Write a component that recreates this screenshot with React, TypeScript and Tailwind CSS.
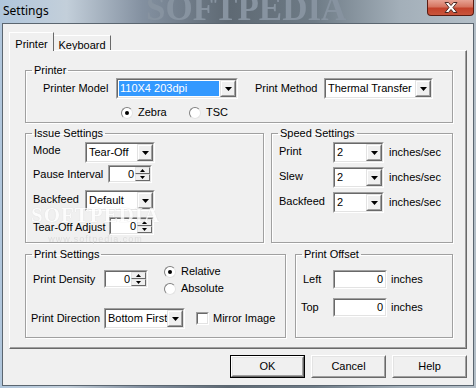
import React from 'react';

const DropButton = () => (
    <div className="w-[16px] h-full border border-t-[#e3e3e3] border-l-[#e3e3e3] border-r-[#696969] border-b-[#696969] bg-[#f0f0f0]">
        <div className="w-full h-full border border-t-white border-l-white border-r-[#a0a0a0] border-b-[#a0a0a0] flex items-center justify-center">
            <svg width="7" height="4" viewBox="0 0 7 4">
                <path d="M0 0h7L3.5 4z" fill="#000" />
            </svg>
        </div>
    </div>
);

const SpinButton = ({ up }: { up?: boolean }) => (
    <div className="flex-1 border border-t-[#e3e3e3] border-l-[#e3e3e3] border-r-[#696969] border-b-[#696969] bg-[#f0f0f0] flex items-center justify-center">
        <svg width="5" height="3" viewBox="0 0 5 3">
            <path d={up ? 'M2.5 0L5 3H0z' : 'M0 0h5L2.5 3z'} fill="#000" />
        </svg>
    </div>
);

// classic 2-level sunken frame
const Sunken: React.FC<{ className: string; children?: React.ReactNode }> = ({ className, children }) => (
    <div className={`${className} border border-t-[#a0a0a0] border-l-[#a0a0a0] border-r-white border-b-white`}>
        <div className="w-full h-full flex border border-t-[#696969] border-l-[#696969] border-r-[#e3e3e3] border-b-[#e3e3e3] bg-white">
            {children}
        </div>
    </div>
);

const Combo = ({ w, value, selected }: { w: string; value: string; selected?: boolean }) => (
    <Sunken className={`${w} h-[21px]`}>
        <div className="flex-1 min-w-0 flex items-center p-[1px] overflow-hidden">
            <div className={`h-full flex-1 flex items-center pl-[1px] whitespace-nowrap ${selected ? 'bg-[#3399ff] text-white' : ''}`}>{value}</div>
        </div>
        <DropButton />
    </Sunken>
);

const Spinner = ({ w, value }: { w: string; value: string }) => (
    <Sunken className={`${w} h-[18px]`}>
        <div className="flex-1 flex items-center justify-end pr-[1px]">{value}</div>
        <div className="w-[15px] flex flex-col">
            <SpinButton up />
            <SpinButton />
        </div>
    </Sunken>
);

const Radio = ({ checked, label, w }: { checked?: boolean; label: string; w?: string }) => (
    <div className={`flex items-center h-[13px] ${w ?? ''}`}>
        <div className="w-[12px] h-[12px] rounded-full border border-t-[#808080] border-l-[#808080] border-r-[#e3e3e3] border-b-[#e3e3e3] bg-white flex items-center justify-center">
            {checked && <div className="w-[4px] h-[4px] rounded-full bg-black" />}
        </div>
        <span className="ml-[5px]">{label}</span>
    </div>
);

const Group: React.FC<{ title: string; className: string; children?: React.ReactNode }> = ({ title, className, children }) => (
    <fieldset className={`${className} border border-[#a0a0a0] shadow-[inset_1px_1px_0_#fff,1px_1px_0_#fff]`}>
        <legend className="ml-[6px] px-[2px] leading-[13px]">{title}</legend>
        {children}
    </fieldset>
);

const Button = ({ label, isDefault }: { label: string; isDefault?: boolean }) => (
    <div className={`w-[75px] h-[23px] ${isDefault ? 'border border-black' : ''}`}>
        <div className="w-full h-full border border-t-white border-l-white border-r-[#696969] border-b-[#696969] bg-[#f0f0f0]">
            <div className="w-full h-full border border-t-[#e3e3e3] border-l-[#e3e3e3] border-r-[#a0a0a0] border-b-[#a0a0a0] flex items-center justify-center">
                {label}
            </div>
        </div>
    </div>
);

export default function App() {
    return (
        <div className="relative w-[476px] h-[388px] overflow-hidden flex flex-col bg-[linear-gradient(90deg,#b0c6dc_0%,#c3cfda_14%,#8390a0_30%,#5e6973_48%,#6e7b86_66%,#a3afb9_84%,#b4bfc8_100%)] font-['Liberation_Sans',Arial,sans-serif] text-[11px] text-black">
            {/* title bar */}
            <div className="relative h-[23px] flex items-start overflow-hidden">
                <span className="absolute left-[146px] top-[-11px] font-['Liberation_Serif',serif] font-bold text-[35px] leading-[40px] tracking-[0px] text-[#8793a0] blur-[0.7px] select-none">
                    SOFTPEDIA
                </span>
                <span className="relative pl-[3px] pt-[2px] font-['Noto_Sans',sans-serif] text-[12px] leading-[17px] text-black">Settings</span>
                <div className="relative ml-auto mr-[2px] w-[47px] h-[16px] rounded-b-[4px] border border-t-0 border-[#5a1c12] bg-[linear-gradient(180deg,#e7a293_0%,#d67561_45%,#c3422b_55%,#c9553c_100%)] flex items-center justify-center">
                    <svg width="14" height="11" viewBox="0 0 14 11">
                        <path d="M1 0.5h3.5L7 3.5l2.5-3h3.5L9 5.5l4 5H9.5L7 7.5l-2.5 3H1l4-5z" fill="#fff" stroke="#4a2a24" strokeWidth="1" />
                    </svg>
                </div>
            </div>

            {/* client area */}
            <div className="relative flex-1 ml-[2px] mr-[2px] mb-[2px] border border-[#5b6670] bg-[#f0f0f0] flex flex-col">
                {/* tabs */}
                <div className="h-[26px] pl-[6px] flex items-end">
                    <div className="relative z-10 w-[45px] h-[19px] mb-[-1px] bg-[#f0f0f0] border border-b-0 border-t-white border-l-white border-r-[#696969] flex justify-center pt-[3px]">
                        Printer
                    </div>
                    <div className="w-[57px] h-[15px] border border-b-0 border-l-0 border-t-white border-r-[#696969] flex justify-center pt-[1px]">
                        Keyboard
                    </div>
                </div>

                {/* tab panel */}
                <div className="ml-[6px] w-[458px] h-[299px] border border-t-white border-l-white border-r-[#696969] border-b-[#696969]">
                    <div className="w-full h-full border-r border-b border-r-[#a0a0a0] border-b-[#a0a0a0] pl-[15px] pt-[13px]">
                        <Group title="Printer" className="w-[428px] pb-[3px]">
                            <div className="mt-[1px] h-[21px] flex items-center">
                                <span className="ml-[17px] w-[73px]">Printer Model</span>
                                <Combo w="w-[122px]" value="110X4 203dpi" selected />
                                <span className="ml-[17px] w-[69px]">Print Method</span>
                                <Combo w="w-[109px]" value="Thermal Transfer" />
                            </div>
                            <div className="mt-[7px] flex items-center">
                                <div className="ml-[95px]" />
                                <Radio checked label="Zebra" w="w-[68px]" />
                                <Radio label="TSC" />
                            </div>
                        </Group>

                        <div className="mt-[4px] flex gap-[7px]">
                            <Group title="Issue Settings" className="w-[239px] h-[116px]">
                                <div className="mt-[2px] h-[21px] flex items-center">
                                    <span className="ml-[7px] w-[52px] mt-[-4px]">Mode</span>
                                    <Combo w="w-[70px]" value="Tear-Off" />
                                </div>
                                <div className="mt-[2px] h-[18px] flex items-center">
                                    <span className="ml-[7px] w-[75px]">Pause Interval</span>
                                    <Spinner w="w-[44px]" value="0" />
                                </div>
                                <div className="mt-[7px] h-[21px] flex items-center">
                                    <span className="ml-[7px] w-[52px] mt-[-2px]">Backfeed</span>
                                    <Combo w="w-[70px]" value="Default" />
                                </div>
                                <div className="mt-[6px] h-[18px] flex items-center">
                                    <span className="ml-[7px] w-[76px] mt-[2px]">Tear-Off Adjust</span>
                                    <Spinner w="w-[45px]" value="0" />
                                </div>
                            </Group>

                            <Group title="Speed Settings" className="w-[182px] h-[116px]">
                                {['Print', 'Slew', 'Backfeed'].map((label, i) => (
                                    <div key={label} className={`${i === 0 ? 'mt-[2px]' : 'mt-[4px]'} h-[21px] flex items-center`}>
                                        <span className="ml-[7px] w-[54px] mt-[-2px]">{label}</span>
                                        <Combo w="w-[51px]" value="2" />
                                        <span className="ml-[5px]">inches/sec</span>
                                    </div>
                                ))}
                            </Group>
                        </div>

                        <div className="mt-[5px] flex gap-[9px]">
                            <Group title="Print Settings" className="w-[261px] h-[90px]">
                                <div className="mt-[4px] flex items-start">
                                    <div className="mt-[5px] flex items-center">
                                        <span className="ml-[7px] w-[71px]">Print Density</span>
                                        <Spinner w="w-[44px]" value="0" />
                                    </div>
                                    <div className="ml-[16px] flex flex-col gap-[4px]">
                                        <Radio checked label="Relative" />
                                        <Radio label="Absolute" />
                                    </div>
                                </div>
                                <div className="mt-[13px] h-[21px] flex items-center">
                                    <span className="ml-[5px] w-[73px]">Print Direction</span>
                                    <Combo w="w-[81px]" value="Bottom First" />
                                    <div className="ml-[11px] w-[13px] h-[13px] border border-t-[#a0a0a0] border-l-[#a0a0a0] border-r-white border-b-white">
                                        <div className="w-full h-full border border-t-[#696969] border-l-[#696969] border-r-[#e3e3e3] border-b-[#e3e3e3] bg-white" />
                                    </div>
                                    <span className="ml-[4px]">Mirror Image</span>
                                </div>
                            </Group>

                            <Group title="Print Offset" className="w-[158px] h-[90px]">
                                <div className="mt-[9px] h-[19px] flex items-center">
                                    <span className="ml-[7px] w-[30px]">Left</span>
                                    <Sunken className="w-[54px] h-[19px]">
                                        <div className="flex-1 flex items-center justify-end pr-[2px]">0</div>
                                    </Sunken>
                                    <span className="ml-[4px]">inches</span>
                                </div>
                                <div className="mt-[9px] h-[19px] flex items-center">
                                    <span className="ml-[5px] w-[32px]">Top</span>
                                    <Sunken className="w-[54px] h-[19px]">
                                        <div className="flex-1 flex items-center justify-end pr-[2px]">0</div>
                                    </Sunken>
                                    <span className="ml-[4px]">inches</span>
                                </div>
                            </Group>
                        </div>
                    </div>
                </div>

                {/* buttons */}
                <div className="mt-[6px] pr-[6px] flex justify-end gap-[6px]">
                    <Button label="OK" isDefault />
                    <Button label="Cancel" />
                    <Button label="Help" />
                </div>

                {/* watermark */}
                <div className="absolute left-[28px] top-[180px] pointer-events-none select-none flex flex-col items-center opacity-80">
                    <span className="font-['Liberation_Serif',serif] font-bold text-[21px] leading-[22px] tracking-[1px] text-white [text-shadow:0_0_1px_#c4c4c4]">SOFTPEDIA</span>
                    <span className="mt-[8px] text-[9px] leading-[10px] text-[#d8d8d8] tracking-[1px]">www.softpedia.com</span>
                </div>
            </div>
        </div>
    );
}
